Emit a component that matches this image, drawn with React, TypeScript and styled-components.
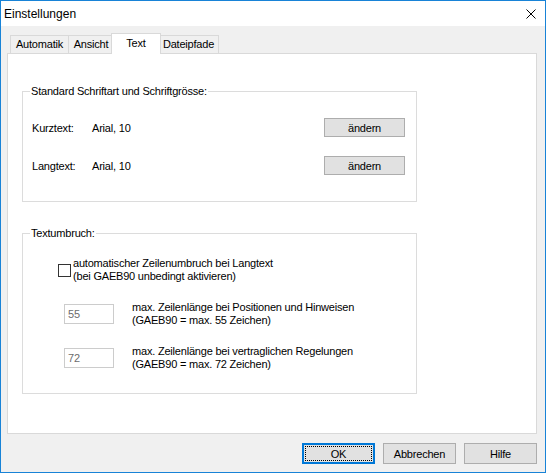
import React, { useState } from "react";
import styled, { createGlobalStyle } from "styled-components";

const GlobalStyle = createGlobalStyle`
  html, body {
    margin: 0;
    padding: 0;
    background: #ffffff;
  }
  * {
    box-sizing: border-box;
  }
`;

const Window = styled.div`
  width: 546px;
  height: 473px;
  border: 1px solid #1883d7;
  display: flex;
  flex-direction: column;
  font-family: "Liberation Sans", Arial, sans-serif;
  font-size: 11px;
  letter-spacing: -0.2px;
  color: #000;
  background: #f0f0f0;
`;

const TitleBar = styled.div`
  height: 25px;
  flex-shrink: 0;
  background: #ffffff;
  display: flex;
  align-items: center;
  justify-content: space-between;
  padding: 0 9px 0 3px;
  font-size: 12px;
  letter-spacing: 0;
`;

const CloseIcon = () => (
  <svg width="10" height="10" viewBox="0 0 10 10">
    <path d="M0.5 0.5 L9.5 9.5 M9.5 0.5 L0.5 9.5" stroke="#000" strokeWidth="1" fill="none" />
  </svg>
);

const Body = styled.div`
  flex: 1;
  display: flex;
  flex-direction: column;
  padding: 7px 8px 0 6px;
`;

const TabStrip = styled.div`
  height: 20px;
  display: flex;
  align-items: flex-end;
  padding-left: 3px;
  position: relative;
  z-index: 1;
`;

const Tab = styled.div<{ $w: number; $active?: boolean }>`
  width: ${(p) => (p.$active ? p.$w + 4 : p.$w)}px;
  height: ${(p) => (p.$active ? 21 : 18)}px;
  margin-left: ${(p) => (p.$active ? -3 : -1)}px;
  margin-right: ${(p) => (p.$active ? -2 : 0)}px;
  margin-bottom: ${(p) => (p.$active ? -1 : 0)}px;
  border: 1px solid #d9d9d9;
  border-bottom: none;
  background: ${(p) => (p.$active ? "#ffffff" : "#f0f0f0")};
  position: relative;
  z-index: ${(p) => (p.$active ? 2 : 1)};
  display: flex;
  justify-content: center;
  padding-top: ${(p) => (p.$active ? 3 : 2)}px;
  line-height: 13px;
  &:first-child {
    margin-left: 0;
  }
`;

const Panel = styled.div`
  height: 381px;
  flex-shrink: 0;
  background: #ffffff;
  border: 1px solid #d9d9d9;
  padding: 31px 0 0 14px;
  display: flex;
  flex-direction: column;
  gap: 25px;
`;

const Group = styled.fieldset<{ $h: number }>`
  width: 395px;
  height: ${(p) => p.$h}px;
  margin: 0;
  padding: 0;
  border: 1px solid #dcdcdc;
  min-width: 0;
`;

const Legend = styled.legend`
  margin-left: 7px;
  padding: 0 1px;
  line-height: 13px;
`;

const FontRows = styled.div`
  padding: 20px 11px 0 9px;
  display: flex;
  flex-direction: column;
  gap: 19px;
`;

const FontRow = styled.div`
  display: grid;
  grid-template-columns: 60px 1fr 81px;
  align-items: center;
  height: 19px;
`;

const PushButton = styled.button<{ $w: number; $h: number; $default?: boolean }>`
  width: ${(p) => p.$w}px;
  height: ${(p) => p.$h}px;
  padding: 0;
  background: #e1e1e1;
  border: ${(p) => (p.$default ? "2px solid #0078d7" : "1px solid #adadad")};
  font-family: inherit;
  font-size: 11px;
  letter-spacing: -0.2px;
  color: #000;
  outline: ${(p) => (p.$default ? "1px dotted #000" : "none")};
  outline-offset: -4px;
`;

const WrapRows = styled.div`
  padding: 17px 0 0 9px;
  display: flex;
  flex-direction: column;
  gap: 18px;
`;

const CheckRow = styled.label`
  display: flex;
  align-items: center;
  gap: 2px;
  margin-left: 26px;
  line-height: 13px;
`;

const CheckBox = styled.span<{ $on: boolean }>`
  width: 13px;
  height: 13px;
  border: 1px solid #333333;
  background: #ffffff;
  flex-shrink: 0;
  display: flex;
  align-items: center;
  justify-content: center;
`;

const LengthRow = styled.div`
  display: flex;
  align-items: center;
  gap: 18px;
  margin-left: 32px;
  line-height: 13px;
  min-height: 26px;
`;

const NumberField = styled.input`
  width: 50px;
  height: 20px;
  border: 1px solid #cccccc;
  background: #ffffff;
  padding: 0 3px;
  font-family: inherit;
  font-size: 11px;
  letter-spacing: -0.2px;
  color: #6d6d6d;
  &:disabled {
    background: #ffffff;
    color: #6d6d6d;
  }
`;

const ButtonBar = styled.div`
  display: flex;
  justify-content: flex-end;
  gap: 8px;
  margin-top: 9px;
`;

const tabs = [
  { label: "Automatik", w: 59 },
  { label: "Ansicht", w: 46 },
  { label: "Text", w: 46 },
  { label: "Dateipfade", w: 61 },
];

export default function App() {
  const [active] = useState("Text");
  const [wrap, setWrap] = useState(false);

  return (
    <>
      <GlobalStyle />
      <Window>
        <TitleBar>
          <span>Einstellungen</span>
          <CloseIcon />
        </TitleBar>
        <Body>
          <TabStrip>
            {tabs.map((t) => (
              <Tab key={t.label} $w={t.w} $active={t.label === active}>
                {t.label}
              </Tab>
            ))}
          </TabStrip>
          <Panel>
            <Group $h={117}>
              <Legend>Standard Schriftart und Schriftgrösse:</Legend>
              <FontRows>
                <FontRow>
                  <span>Kurztext:</span>
                  <span>Arial, 10</span>
                  <PushButton $w={81} $h={19}>ändern</PushButton>
                </FontRow>
                <FontRow>
                  <span>Langtext:</span>
                  <span>Arial, 10</span>
                  <PushButton $w={81} $h={19}>ändern</PushButton>
                </FontRow>
              </FontRows>
            </Group>
            <Group $h={167}>
              <Legend>Textumbruch:</Legend>
              <WrapRows>
                <CheckRow onClick={() => setWrap(!wrap)}>
                  <CheckBox $on={wrap}>
                    {wrap && (
                      <svg width="9" height="9" viewBox="0 0 9 9">
                        <path d="M1 4.5 L3.5 7 L8 1.5" stroke="#000" strokeWidth="1.4" fill="none" />
                      </svg>
                    )}
                  </CheckBox>
                  <span>
                    automatischer Zeilenumbruch bei Langtext
                    <br />
                    (bei GAEB90 unbedingt aktivieren)
                  </span>
                </CheckRow>
                <LengthRow>
                  <NumberField disabled defaultValue="55" />
                  <span>
                    max. Zeilenlänge bei Positionen und Hinweisen
                    <br />
                    (GAEB90 = max. 55 Zeichen)
                  </span>
                </LengthRow>
                <LengthRow>
                  <NumberField disabled defaultValue="72" />
                  <span>
                    max. Zeilenlänge bei vertraglichen Regelungen
                    <br />
                    (GAEB90 = max. 72 Zeichen)
                  </span>
                </LengthRow>
              </WrapRows>
            </Group>
          </Panel>
          <ButtonBar>
            <PushButton $w={73} $h={21} $default>OK</PushButton>
            <PushButton $w={73} $h={21}>Abbrechen</PushButton>
            <PushButton $w={73} $h={21}>Hilfe</PushButton>
          </ButtonBar>
        </Body>
      </Window>
    </>
  );
}
